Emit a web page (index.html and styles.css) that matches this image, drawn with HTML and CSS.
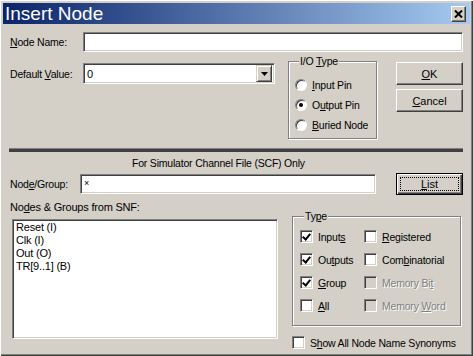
FILE: index.html
```html
<!DOCTYPE html>
<html lang="en">
<head>
  <meta charset="UTF-8" />
  <title>Insert Node</title>
  <link rel="stylesheet" href="styles.css">
</head>
<body>
  <div class="window">
    <div class="titlebar">
      <span class="title">Insert Node</span>
      <button class="close-btn" aria-label="Close">
        <svg width="9" height="8" viewBox="0 0 9 8"><path d="M1 0.5 L8 7.5 M8 0.5 L1 7.5" stroke="#000" stroke-width="2"/></svg>
      </button>
    </div>

    <div class="content">
      <div class="row name-row">
        <label class="lbl"><u>N</u>ode Name:</label>
        <div class="field name-field"></div>
      </div>

      <div class="row top-area">
        <div class="default-val">
          <label class="lbl">Default <u>V</u>alue:</label>
          <div class="field combo">
            <span class="combo-text">0</span>
            <span class="combo-btn"><svg width="7" height="4" viewBox="0 0 7 4"><path d="M0 0 H7 L3.5 4 Z" fill="#000"/></svg></span>
          </div>
        </div>

        <fieldset class="group io-group">
          <legend>I/O <u>T</u>ype</legend>
          <div class="opt"><span class="radio"></span><span class="txt"><u>I</u>nput Pin</span></div>
          <div class="opt"><span class="radio on"></span><span class="txt">O<u>u</u>tput Pin</span></div>
          <div class="opt"><span class="radio"></span><span class="txt"><u>B</u>uried Node</span></div>
        </fieldset>

        <div class="btn-col">
          <button class="btn"><u>O</u>K</button>
          <button class="btn"><u>C</u>ancel</button>
        </div>
      </div>

      <div class="separator"></div>
      <div class="caption">For Simulator Channel File (SCF) Only</div>

      <div class="row group-row">
        <label class="lbl short">Nod<u>e</u>/Group:</label>
        <div class="field group-field">×</div>
        <button class="btn btn-default"><span class="focus"><u>L</u>ist</span></button>
      </div>

      <div class="snf-label">No<u>d</u>es &amp; Groups from SNF:</div>

      <div class="row bottom-area">
        <div class="listbox">
          <div>Reset (I)</div>
          <div>Clk (I)</div>
          <div>Out (O)</div>
          <div>TR[9..1] (B)</div>
        </div>

        <div class="right-col">
          <fieldset class="group type-group">
            <legend>Ty<u>p</u>e</legend>
            <div class="check-grid">
              <div class="opt"><span class="check on"></span><span class="txt">Input<u>s</u></span></div>
              <div class="opt"><span class="check"></span><span class="txt"><u>R</u>egistered</span></div>
              <div class="opt"><span class="check on"></span><span class="txt">Ou<u>t</u>puts</span></div>
              <div class="opt"><span class="check"></span><span class="txt">Com<u>b</u>inatorial</span></div>
              <div class="opt"><span class="check on"></span><span class="txt"><u>G</u>roup</span></div>
              <div class="opt disabled"><span class="check"></span><span class="txt">Memory Bi<u>t</u></span></div>
              <div class="opt"><span class="check"></span><span class="txt"><u>A</u>ll</span></div>
              <div class="opt disabled"><span class="check"></span><span class="txt">Memory <u>W</u>ord</span></div>
            </div>
          </fieldset>
          <div class="opt synonyms"><span class="check"></span><span class="txt">S<u>h</u>ow All Node Name Synonyms</span></div>
        </div>
      </div>
    </div>
  </div>
</body>
</html>
```

FILE: styles.css
```css
html, body {
  margin: 0;
  padding: 0;
  background: #d4d0c8;
}

body {
  font-family: 'Liberation Sans', Arial, sans-serif;
  font-size: 10.5px;
  letter-spacing: -0.2px;
  color: #000;
}

.window {
  width: 473px;
  height: 356px;
  box-sizing: border-box;
  padding: 3px;
  background: #d4d0c8;
  box-shadow: inset 1px 1px 0 #fff, inset -1px -1px 0 #404040, inset -2px -2px 0 #808080;
  overflow: hidden;
}

.titlebar {
  height: 21px;
  display: flex;
  align-items: center;
  justify-content: space-between;
  padding: 0 4px 0 2px;
  background: linear-gradient(to right, #0a246a, #a6caf0);
}

.title {
  color: #fff;
  font-size: 19px;
  letter-spacing: 0;
  line-height: 21px;
}

.close-btn {
  width: 15px;
  height: 16px;
  padding: 0;
  margin: 0;
  border: 1px solid;
  border-color: #fff #404040 #404040 #fff;
  box-shadow: inset -1px -1px 0 #808080;
  background: #d4d0c8;
  display: flex;
  align-items: center;
  justify-content: center;
}

.content {
  padding: 8px 7px 0 7px;
}

.row {
  display: flex;
  align-items: center;
}

.lbl {
  width: 73px;
  flex-shrink: 0;
}

.lbl.short {
  width: 70px;
}

.field {
  box-sizing: border-box;
  background: #fff;
  border: 1px solid;
  border-color: #808080 #fff #fff #808080;
  box-shadow: inset 1px 1px 0 #404040, inset -1px -1px 0 #d4d0c8;
}

.name-field {
  height: 20px;
  flex: 1;
}

.top-area {
  align-items: flex-start;
  margin-top: 3px;
}

.default-val {
  display: flex;
  align-items: center;
  margin-top: 8px;
}

.combo {
  width: 192px;
  height: 21px;
  display: flex;
  align-items: center;
  justify-content: space-between;
  padding: 0 2px 0 3px;
  font-size: 11px;
}

.combo-btn {
  width: 16px;
  height: 17px;
  box-sizing: border-box;
  display: flex;
  align-items: center;
  justify-content: center;
  background: #d4d0c8;
  border: 1px solid;
  border-color: #d4d0c8 #404040 #404040 #d4d0c8;
  box-shadow: inset 1px 1px 0 #fff, inset -1px -1px 0 #808080;
}

.group {
  margin: 0;
  padding: 0;
  min-width: 0;
  border: 1px solid #808080;
  box-shadow: 1px 1px 0 #fff, inset 1px 1px 0 #fff;
}

.group legend {
  padding: 0 1px;
  margin-left: 4px;
  line-height: 13px;
  background: #d4d0c8;
}

.io-group {
  width: 89px;
  height: 84px;
  box-sizing: border-box;
  margin-left: 13px;
  padding: 10px 0 0 6px;
  overflow: hidden;
}

.opt {
  display: flex;
  align-items: center;
  white-space: nowrap;
  height: 13px;
}

.io-group .opt + .opt {
  margin-top: 7px;
}

.io-group .txt {
  width: 56px;
  overflow: hidden;
}

.radio {
  width: 12px;
  height: 12px;
  box-sizing: border-box;
  flex-shrink: 0;
  margin-right: 5px;
  border-radius: 50%;
  background: #fff;
  border: 1px solid;
  border-color: #808080 #fff #fff #808080;
  box-shadow: inset 1px 1px 0 #404040;
  display: flex;
  align-items: center;
  justify-content: center;
}

.radio.on::after {
  content: "";
  width: 4px;
  height: 4px;
  border-radius: 50%;
  background: #000;
}

.btn-col {
  display: flex;
  flex-direction: column;
  gap: 4px;
  margin-left: 19px;
  margin-top: 7px;
}

.btn {
  width: 67px;
  height: 23px;
  padding: 0;
  font: inherit;
  font-size: 11px;
  color: #000;
  background: #d4d0c8;
  border: 1px solid;
  border-color: #fff #404040 #404040 #fff;
  box-shadow: inset -1px -1px 0 #808080;
}

.separator {
  height: 3px;
  margin: 9px 0 0 -1px;
  width: 454px;
  border-top: 1px solid #808080;
  background: #404040;
}

.caption {
  line-height: 13px;
  margin-top: 5px;
  padding-left: 122px;
}

.group-row {
  margin-top: 3px;
}

.group-field {
  width: 296px;
  height: 20px;
  padding: 0 3px;
  line-height: 16px;
  font-size: 9px;
}

.btn-default {
  margin-left: 20px;
  height: 22px;
  border: 1px solid #000;
  box-shadow: inset 1px 1px 0 #fff, inset -1px -1px 0 #404040, inset -2px -2px 0 #808080;
  padding: 3px;
}

.btn-default .focus {
  display: block;
  height: 100%;
  box-sizing: border-box;
  border: 1px dotted #000;
  line-height: 12px;
}

.snf-label {
  line-height: 13px;
  margin-top: 6px;
  font-size: 11px;
}

.bottom-area {
  align-items: flex-start;
}

.listbox {
  width: 266px;
  height: 120px;
  box-sizing: border-box;
  margin: 5px 0 0 2px;
  padding: 1px 3px;
  line-height: 13px;
  font-size: 11px;
  background: #fff;
  border: 1px solid;
  border-color: #808080 #fff #fff #808080;
  box-shadow: inset 1px 1px 0 #404040, inset -1px -1px 0 #d4d0c8;
}

.right-col {
  margin-left: 14px;
  margin-top: -4px;
}

.type-group {
  width: 169px;
  height: 116px;
  box-sizing: border-box;
  padding: 7px 0 0 7px;
}

.check-grid {
  display: grid;
  grid-template-columns: 64px auto;
  row-gap: 10px;
}

.check {
  width: 13px;
  height: 13px;
  box-sizing: border-box;
  flex-shrink: 0;
  margin-right: 5px;
  background: #fff;
  border: 1px solid;
  border-color: #808080 #fff #fff #808080;
  box-shadow: inset 1px 1px 0 #404040, inset -1px -1px 0 #d4d0c8;
  display: flex;
  align-items: center;
  justify-content: center;
}

.check.on::after {
  content: "";
  width: 3px;
  height: 6px;
  margin-top: -2px;
  border: solid #000;
  border-width: 0 2px 2px 0;
  transform: rotate(40deg);
}

.opt.disabled {
  color: #808080;
  text-shadow: 1px 1px 0 #fff;
}

.opt.disabled .check {
  background: #d4d0c8;
}

.synonyms {
  margin-top: 10px;
}
```
